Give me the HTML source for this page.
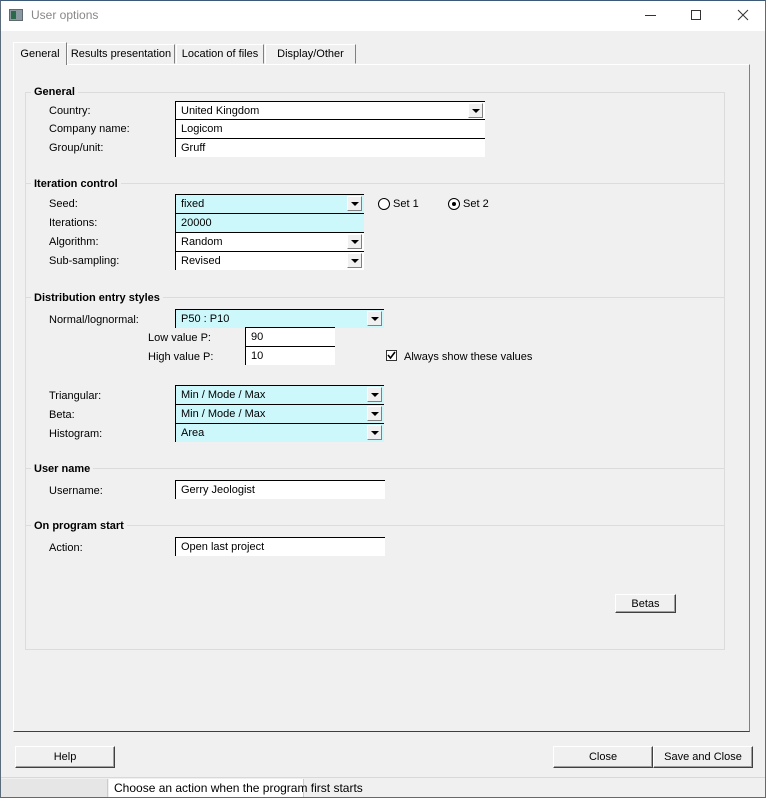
<!DOCTYPE html>
<html><head><meta charset="utf-8"><style>
*{box-sizing:border-box;margin:0;padding:0}
body{width:766px;height:798px;background:#f0f0f0;font-family:"Liberation Sans",Arial,sans-serif;font-size:11px;color:#000;position:relative;overflow:hidden}
.a{position:absolute;white-space:nowrap}
.win{left:0;top:0;width:766px;height:798px;border:1px solid #5a6b7c;border-top-color:#3c5a78}
.title{left:1px;top:1px;width:764px;height:30px;background:#fff}
.f{position:absolute;height:19px;border-top:1px solid #000;border-left:1px solid #000;background:#fff;padding:3px 0 0 5px;font-size:11px}
.c{background:#ccf7fb}
.dd{position:absolute;right:2px;top:1px;width:15px;height:15px;background:#f0f0f0;border:1px solid;border-color:#fff #808080 #808080 #fff}
.dd:after{content:"";position:absolute;left:3px;top:5px;border-left:4px solid transparent;border-right:4px solid transparent;border-top:4px solid #000}
.h{font-weight:bold;background:#f0f0f0;padding:0 3px}
.line{position:absolute;left:26px;width:698px;height:1px;background:#dcdcdc}
.btn{position:absolute;background:#f0f0f0;border:1px solid;border-color:#fff #404040 #404040 #fff;box-shadow:inset -1px -1px 0 #a0a0a0;text-align:center;font-size:11px}
.tab{position:absolute;top:44px;height:20px;border:1px solid;border-color:#fff #808080 transparent #fff;padding:3px 0 0 0;text-align:center}
</style></head><body>
<div class="a win"></div>
<div class="a title"></div>
<div class="a" style="left:9px;top:9px;width:14px;height:12px;background:#8a9aa0;border:1px solid #606870"><div style="position:absolute;left:1px;top:1px;width:5px;height:8px;background:#2a6a4a"></div></div>
<div class="a" style="left:31px;top:8px;font-size:12px;color:#888">User options</div>
<div class="a" style="left:645px;top:15px;width:11px;height:1px;background:#333"></div>
<div class="a" style="left:691px;top:10px;width:10px;height:10px;border:1px solid #333"></div>
<svg class="a" style="left:737px;top:9px" width="12" height="12"><path d="M1 1L11 11M11 1L1 11" stroke="#333" stroke-width="1"/></svg>

<div class="a" style="left:13px;top:64px;width:737px;height:668px;border:1px solid;border-color:#fff #808080 #404040 #fff"></div>
<div class="tab" style="left:13px;top:42px;width:54px;height:23px;background:#f0f0f0;padding-top:5px;border-bottom:none">General</div>
<div class="tab" style="left:67px;width:108px">Results presentation</div>
<div class="tab" style="left:176px;width:88px">Location of files</div>
<div class="tab" style="left:265px;width:91px">Display/Other</div>

<div class="a" style="left:25px;top:92px;width:700px;height:558px;border:1px solid #dcdcdc"></div>

<div class="line" style="top:92px"></div>
<div class="a h" style="left:31px;top:86px">General</div>
<div class="a" style="left:49px;top:105px">Country:</div>
<div class="a" style="left:49px;top:123px">Company name:</div>
<div class="a" style="left:49px;top:142px">Group/unit:</div>
<div class="f" style="left:175px;top:101px;width:310px">United Kingdom<div class="dd"></div></div>
<div class="f" style="left:175px;top:119px;width:310px">Logicom</div>
<div class="f" style="left:175px;top:138px;width:310px">Gruff</div>

<div class="line" style="top:183px"></div>
<div class="a h" style="left:31px;top:178px">Iteration control</div>
<div class="a" style="left:49px;top:198px">Seed:</div>
<div class="a" style="left:49px;top:217px">Iterations:</div>
<div class="a" style="left:49px;top:236px">Algorithm:</div>
<div class="a" style="left:49px;top:255px">Sub-sampling:</div>
<div class="f c" style="left:175px;top:194px;width:189px">fixed<div class="dd"></div></div>
<div class="f c" style="left:175px;top:213px;width:189px">20000</div>
<div class="f" style="left:175px;top:232px;width:189px">Random<div class="dd"></div></div>
<div class="f" style="left:175px;top:251px;width:189px">Revised<div class="dd"></div></div>
<div class="a" style="left:378px;top:198px;width:12px;height:12px;border-radius:50%;border:1px solid #000;background:#fff"></div>
<div class="a" style="left:393px;top:198px">Set 1</div>
<div class="a" style="left:448px;top:198px;width:12px;height:12px;border-radius:50%;border:1px solid #000;background:#fff"><div style="position:absolute;left:3px;top:3px;width:4px;height:4px;border-radius:50%;background:#000"></div></div>
<div class="a" style="left:463px;top:198px">Set 2</div>

<div class="line" style="top:297px"></div>
<div class="a h" style="left:31px;top:292px">Distribution entry styles</div>
<div class="a" style="left:49px;top:314px">Normal/lognormal:</div>
<div class="f c" style="left:175px;top:309px;width:209px">P50 : P10<div class="dd"></div></div>
<div class="a" style="left:148px;top:332px">Low value P:</div>
<div class="a" style="left:148px;top:351px">High value P:</div>
<div class="f" style="left:245px;top:327px;width:90px">90</div>
<div class="f" style="left:245px;top:346px;width:90px">10</div>
<div class="a" style="left:386px;top:350px;width:11px;height:11px;border:1px solid #333;background:#fff"></div>
<svg class="a" style="left:386px;top:350px" width="11" height="11"><path d="M2 5L4.5 8L9 2" stroke="#000" stroke-width="1.6" fill="none"/></svg>
<div class="a" style="left:404px;top:351px">Always show these values</div>
<div class="a" style="left:49px;top:390px">Triangular:</div>
<div class="a" style="left:49px;top:409px">Beta:</div>
<div class="a" style="left:49px;top:428px">Histogram:</div>
<div class="f c" style="left:175px;top:385px;width:209px">Min / Mode / Max<div class="dd"></div></div>
<div class="f c" style="left:175px;top:404px;width:209px">Min / Mode / Max<div class="dd"></div></div>
<div class="f c" style="left:175px;top:423px;width:209px">Area<div class="dd"></div></div>

<div class="line" style="top:468px"></div>
<div class="a h" style="left:31px;top:463px">User name</div>
<div class="a" style="left:49px;top:485px">Username:</div>
<div class="f" style="left:175px;top:480px;width:210px">Gerry Jeologist</div>

<div class="line" style="top:525px"></div>
<div class="a h" style="left:31px;top:520px">On program start</div>
<div class="a" style="left:49px;top:542px">Action:</div>
<div class="f" style="left:175px;top:537px;width:210px">Open last project</div>

<div class="btn" style="left:615px;top:594px;width:61px;height:19px;padding-top:3px">Betas</div>

<div class="btn" style="left:15px;top:746px;width:100px;height:22px;padding-top:4px">Help</div>
<div class="btn" style="left:553px;top:746px;width:100px;height:22px;padding-top:4px">Close</div>
<div class="btn" style="left:653px;top:746px;width:100px;height:22px;padding-top:4px">Save and Close</div>

<div class="a" style="left:1px;top:777px;width:764px;height:1px;background:#d8d8d8"></div>
<div class="a" style="left:1px;top:779px;width:107px;height:18px;background:#e6e6e6;border-right:1px solid #ccc"></div>
<div class="a" style="left:109px;top:779px;width:194px;height:18px;background:#fff"></div>
<div class="a" style="left:303px;top:779px;width:1px;height:18px;background:#ccc"></div>
<div class="a" style="left:114px;top:781px;font-size:12px">Choose an action when the program first starts</div>
</body></html>
